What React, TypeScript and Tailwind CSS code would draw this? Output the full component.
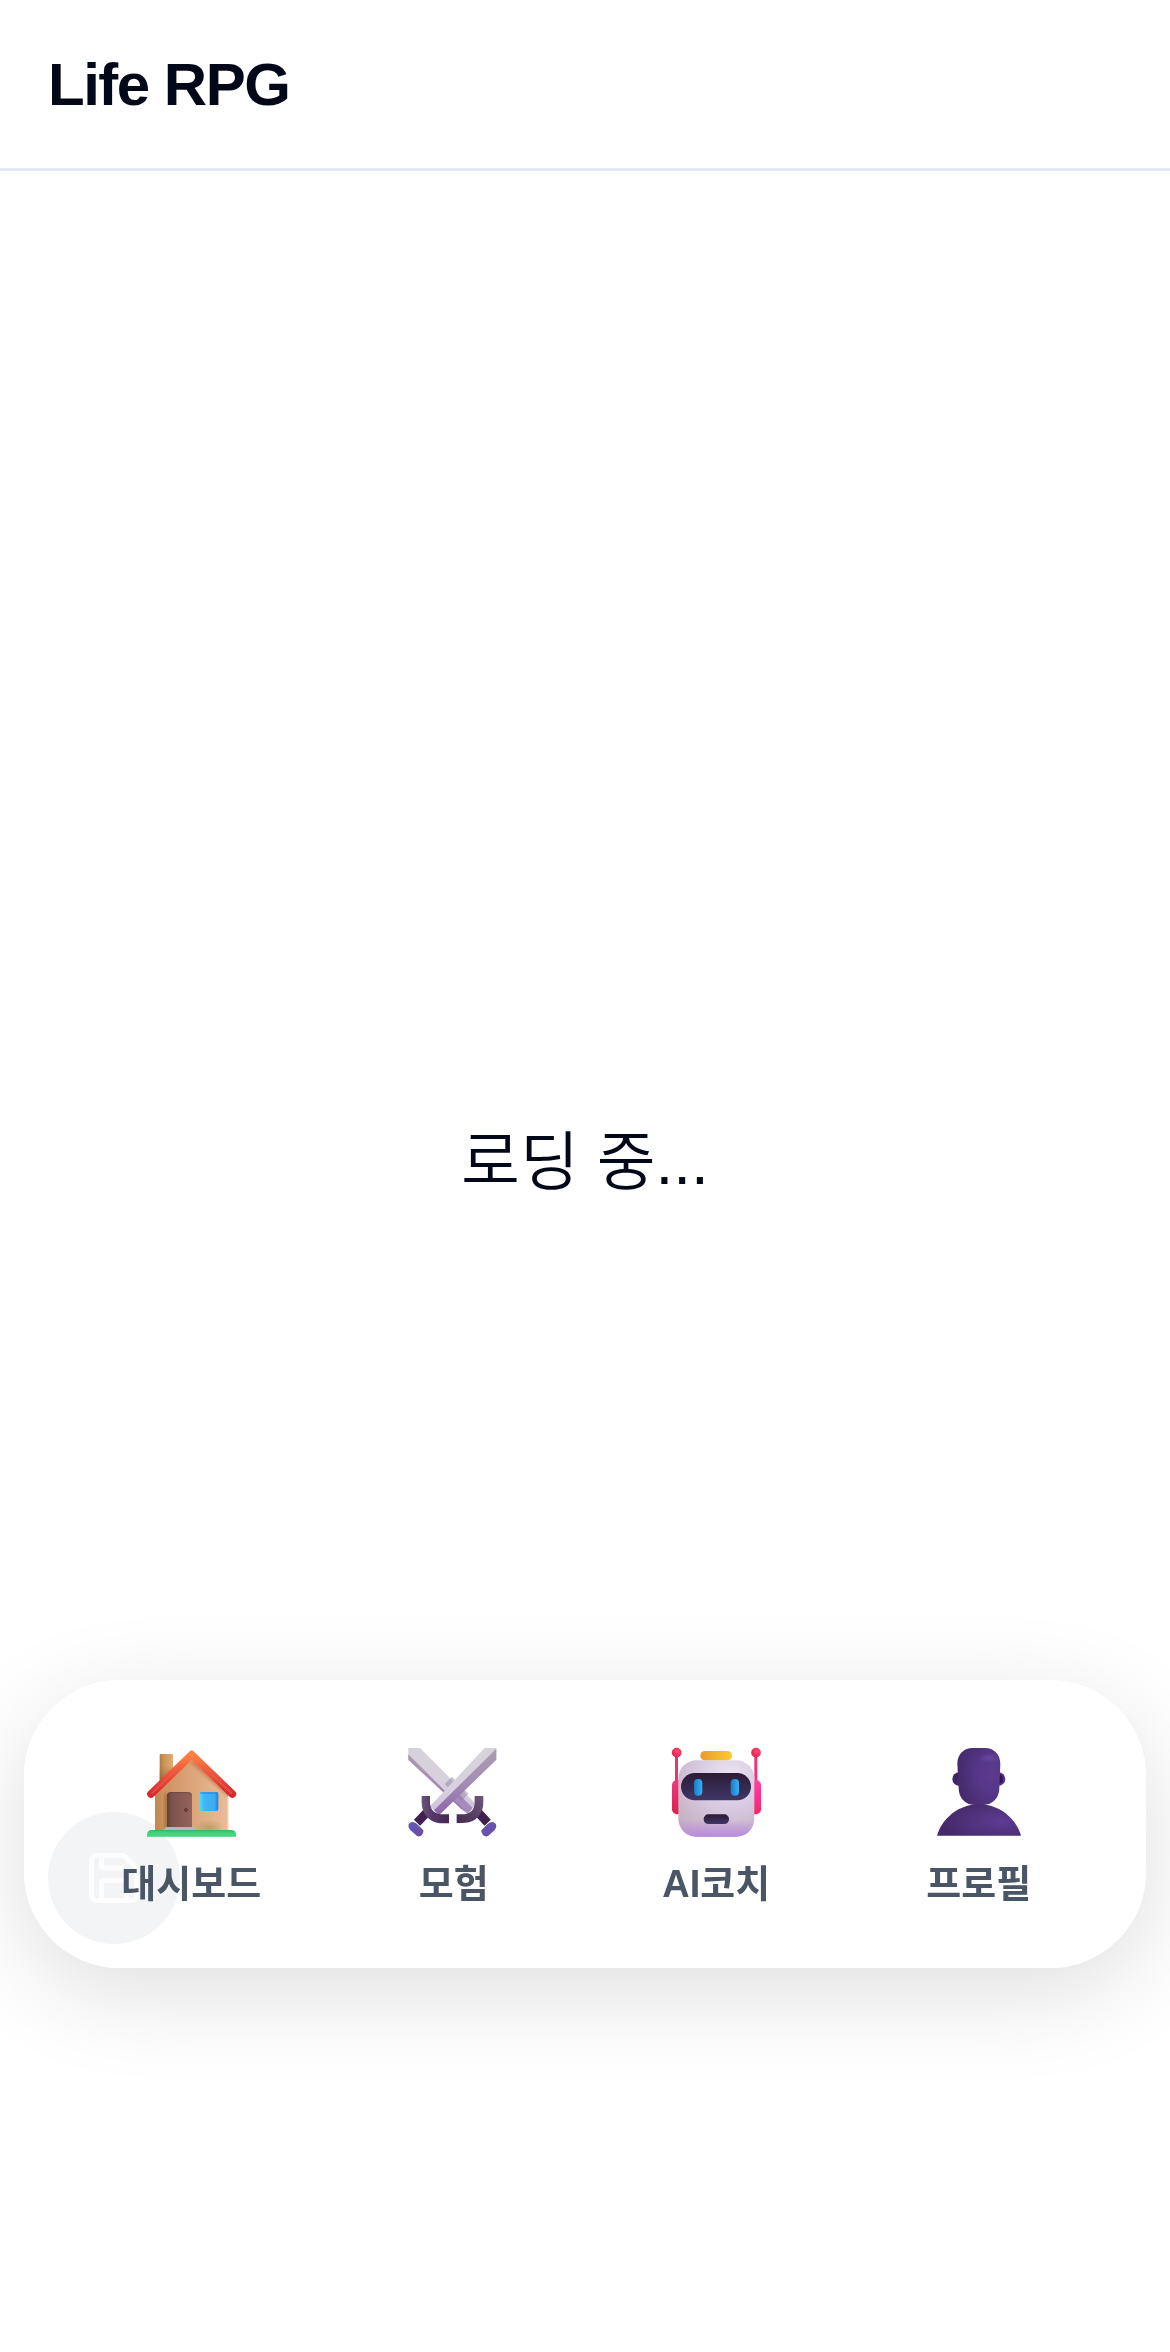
import React from "react";
import { Save } from "lucide-react";

function HouseIcon() {
  return (
    <svg viewBox="39 27 288 288" className="size-24" aria-hidden="true">
      <defs>
        <linearGradient id="h-wall" x1="0" x2="1">
          <stop offset="0" stopColor="#c08850" />
          <stop offset=".14" stopColor="#cf935f" />
          <stop offset=".45" stopColor="#dba276" />
          <stop offset="1" stopColor="#e8bd98" />
        </linearGradient>
        <linearGradient id="h-chim" x1="0" x2="1">
          <stop offset="0" stopColor="#b07c42" />
          <stop offset=".3" stopColor="#cc9258" />
          <stop offset="1" stopColor="#e3ac72" />
        </linearGradient>
        <linearGradient id="h-chimshade" x1="0" y1="0" x2="0" y2="1">
          <stop offset=".4" stopColor="#8d6232" stopOpacity="0" />
          <stop offset="1" stopColor="#8d6232" stopOpacity=".9" />
        </linearGradient>
        <linearGradient id="h-roof" x1="0" y1="0" x2="0" y2="1">
          <stop offset="0" stopColor="#ff8142" />
          <stop offset=".45" stopColor="#ee573c" />
          <stop offset="1" stopColor="#d8282f" />
        </linearGradient>
        <linearGradient id="h-door" x1="0" x2="1">
          <stop offset="0" stopColor="#5f4038" />
          <stop offset=".2" stopColor="#7c544d" />
          <stop offset="1" stopColor="#96625b" />
        </linearGradient>
        <linearGradient id="h-win" x1="0" x2="1">
          <stop offset="0" stopColor="#4be0ff" />
          <stop offset=".25" stopColor="#3fb6f8" />
          <stop offset=".8" stopColor="#3fabf0" />
          <stop offset="1" stopColor="#1f87e0" />
        </linearGradient>
        <linearGradient id="h-grass" x1="0" y1="0" x2="0" y2="1">
          <stop offset="0" stopColor="#35b765" />
          <stop offset=".5" stopColor="#43d67f" />
          <stop offset="1" stopColor="#40d47b" />
        </linearGradient>
        <radialGradient id="h-bush">
          <stop offset="0" stopColor="#c19d68" />
          <stop offset="1" stopColor="#c19d68" stopOpacity="0" />
        </radialGradient>
        <filter id="h-blur" x="-20%" y="-20%" width="140%" height="140%">
          <feGaussianBlur stdDeviation="4" />
        </filter>
        <clipPath id="h-clip">
          <path d="M75 286V172L185 70L295 172V286Z" />
        </clipPath>
      </defs>
      <rect x="89" y="57" width="40" height="90" rx="3" fill="url(#h-chim)" />
      <rect x="89" y="57" width="40" height="90" rx="3" fill="url(#h-chimshade)" />
      <path d="M75 286V172L185 70L295 172V286Z" fill="url(#h-wall)" />
      <g clipPath="url(#h-clip)">
        <path d="M185 80L305 188" stroke="#b4683f" strokeWidth="9" opacity=".65" filter="url(#h-blur)" />
        <rect x="104" y="176" width="16" height="110" fill="#9a6335" opacity=".7" filter="url(#h-blur)" />
        <ellipse cx="237" cy="278" rx="46" ry="24" fill="url(#h-bush)" />
        <path d="M293 186V286" stroke="#f3cfa2" strokeWidth="4" />
      </g>
      <path d="M111 280V182Q111 171 122 171H175Q186 171 186 182V280Z" fill="url(#h-door)" />
      <path d="M114 181Q115 174 123 173H175Q183 174 184 182" fill="none" stroke="#63423b" strokeWidth="3" opacity=".6" />
      <circle cx="168" cy="225" r="4.5" fill="#7e4e48" stroke="#543430" strokeWidth="3" />
      <path d="M102 286Q104 276 112 276H188Q195 276 195 286Z" fill="#b9b5bf" />
      <rect x="208" y="171" width="57" height="57" rx="7" fill="url(#h-win)" />
      <path d="M211 174H262V224" fill="none" stroke="#2286df" strokeWidth="4" opacity=".7" />
      <path d="M51 305V300Q51 285 66 285H303Q318 285 318 300V305Z" fill="url(#h-grass)" />
      <path d="M63 177L185 59L307 177" fill="none" stroke="url(#h-roof)" strokeWidth="23" strokeLinecap="round" strokeLinejoin="round" />
      <path d="M66 175L150 94M304 175L220 94" fill="none" stroke="#f15d48" strokeWidth="6" strokeLinecap="round" opacity=".55" />
    </svg>
  );
}

function SwordsIcon() {
  return (
    <svg viewBox="32 27 288 288" className="size-24" aria-hidden="true">
      <defs>
        <linearGradient id="s-light" x1="0" y1="0" x2="0" y2="1">
          <stop offset="0" stopColor="#d6d2da" />
          <stop offset=".6" stopColor="#d8d0df" />
          <stop offset="1" stopColor="#cfbfdc" />
        </linearGradient>
        <linearGradient id="s-dark" x1="0" y1="0" x2="0" y2="1">
          <stop offset="0" stopColor="#a89eb0" />
          <stop offset=".5" stopColor="#a48eb4" />
          <stop offset="1" stopColor="#8c66a8" />
        </linearGradient>
        <linearGradient id="s-guard" x1="0" x2="1">
          <stop offset="0" stopColor="#6a5478" />
          <stop offset=".4" stopColor="#553868" />
          <stop offset="1" stopColor="#432850" />
        </linearGradient>
        <linearGradient id="s-guard2" x1="1" y1="0" x2="0" y2="1">
          <stop offset="0" stopColor="#6d587a" />
          <stop offset="1" stopColor="#44294f" />
        </linearGradient>
        <linearGradient id="s-pommel" x1="0" y1="0" x2="1" y2="1">
          <stop offset="0" stopColor="#6657b5" />
          <stop offset=".5" stopColor="#6554ac" />
          <stop offset="1" stopColor="#744698" />
        </linearGradient>
      </defs>
      <path d="M39 39H74L232 197L240 207L222 235L205 224L39 74Z" fill="url(#s-light)" />
      <path d="M39 58L213 232L198 222L39 75Z" fill="url(#s-dark)" />
      <path d="M148 147L170 125L220 176L197 198Z" fill="#8f7d9c" opacity=".45" />
      <path d="M165 190L184 170L232 219L216 237Z" fill="#9577b0" opacity=".75" />
      <path d="M248 232L277 263" stroke="#40204f" strokeWidth="26" />
      <path d="M238 183H264V200C264 240 240 264 200 264H184V238H200C225 238 238 225 238 200Z" fill="url(#s-guard2)" />
      <path d="M258 286Q256 292 263 300Q270 307 278 303L299 284Q305 276 302 268Q296 259 286 262Q281 263 276 268Z" fill="url(#s-pommel)" />
      <path d="M268 39H303V70L128 240L104 214Z" fill="url(#s-light)" />
      <path d="M303 41V74L132 240L116 226Z" fill="url(#s-dark)" />
      <path d="M95 232L65 263" stroke="#40204f" strokeWidth="26" />
      <path d="M79 183H104V200C104 225 118 238 143 238H161V265H143C104 265 79 240 79 200Z" fill="url(#s-guard)" />
      <path d="M84 286Q86 292 80 300Q73 307 65 303L44 284Q37 276 40 268Q46 259 56 262Q61 263 66 268Z" fill="url(#s-pommel)" />
    </svg>
  );
}

function RobotIcon() {
  return (
    <svg viewBox="39 27 288 288" className="size-24" aria-hidden="true">
      <defs>
        <radialGradient id="r-face" cx=".68" cy=".2" r=".9">
          <stop offset="0" stopColor="#ebe4f0" />
          <stop offset=".45" stopColor="#d9cbe4" />
          <stop offset="1" stopColor="#c6aebf" />
        </radialGradient>
        <linearGradient id="r-bottom" x1="0" y1="0" x2="0" y2="1">
          <stop offset=".78" stopColor="#b98be0" stopOpacity="0" />
          <stop offset="1" stopColor="#b98be0" />
        </linearGradient>
        <linearGradient id="r-visor" x1="0" y1="0" x2="0" y2="1">
          <stop offset="0" stopColor="#2d1a35" />
          <stop offset="1" stopColor="#3e3768" />
        </linearGradient>
        <linearGradient id="r-hat" x1="0" x2="1">
          <stop offset="0" stopColor="#e99a2e" />
          <stop offset=".5" stopColor="#f3b431" />
          <stop offset="1" stopColor="#fcc92f" />
        </linearGradient>
        <linearGradient id="r-eye" x1="0" x2="1">
          <stop offset="0" stopColor="#1c79c4" />
          <stop offset=".6" stopColor="#2c9de4" />
          <stop offset="1" stopColor="#36abef" />
        </linearGradient>
        <linearGradient id="r-ear" x1="0" y1="0" x2="0" y2="1">
          <stop offset="0" stopColor="#ee3a7f" />
          <stop offset="1" stopColor="#da1f4c" />
        </linearGradient>
        <linearGradient id="r-ear2" x1="0" y1="0" x2="0" y2="1">
          <stop offset="0" stopColor="#fb479b" />
          <stop offset=".5" stopColor="#ff2e8c" />
          <stop offset="1" stopColor="#f3285f" />
        </linearGradient>
        <radialGradient id="r-ball" cx=".6" cy=".35" r=".7">
          <stop offset="0" stopColor="#ff4a70" />
          <stop offset="1" stopColor="#e11e50" />
        </radialGradient>
      </defs>
      <rect x="60" y="60" width="9" height="90" fill="#e9366d" />
      <rect x="298" y="60" width="9" height="90" fill="#f0347a" />
      <circle cx="65" cy="53" r="14.5" fill="url(#r-ball)" />
      <circle cx="303" cy="53" r="14.5" fill="url(#r-ball)" />
      <rect x="51" y="135" width="40" height="103" rx="15" fill="url(#r-ear)" />
      <rect x="278" y="135" width="40" height="103" rx="15" fill="url(#r-ear2)" />
      <rect x="70" y="76" width="228" height="229" rx="54" fill="url(#r-face)" />
      <rect x="70" y="76" width="228" height="229" rx="54" fill="url(#r-bottom)" />
      <rect x="136" y="48" width="95" height="28" rx="14" fill="url(#r-hat)" />
      <rect x="78" y="114" width="210" height="82" rx="41" fill="url(#r-visor)" />
      <rect x="117" y="132" width="25" height="50" rx="12" fill="url(#r-eye)" />
      <rect x="227" y="132" width="25" height="50" rx="12" fill="url(#r-eye)" />
      <rect x="146" y="238" width="76" height="29" rx="14" fill="url(#r-visor)" />
    </svg>
  );
}

function PersonIcon() {
  return (
    <svg viewBox="33 27 288 288" className="size-24" aria-hidden="true">
      <defs>
        <radialGradient id="p-head" cx=".82" cy=".45" r=".8">
          <stop offset="0" stopColor="#5c3a8e" />
          <stop offset=".4" stopColor="#57378a" />
          <stop offset="1" stopColor="#452b6c" />
        </radialGradient>
        <radialGradient id="p-body" cx=".76" cy=".55" r=".7">
          <stop offset="0" stopColor="#5e3b93" />
          <stop offset="1" stopColor="#452a69" />
        </radialGradient>
        <radialGradient id="p-shine">
          <stop offset="0" stopColor="#6b46a0" />
          <stop offset="1" stopColor="#6b46a0" stopOpacity="0" />
        </radialGradient>
      </defs>
      <ellipse cx="117" cy="132" rx="20" ry="20" fill="#41236a" />
      <ellipse cx="236" cy="132" rx="20" ry="20" fill="#55318a" />
      <ellipse cx="238" cy="132" rx="11" ry="14" fill="#321350" />
      <path d="M51 302C66 250 116 208 177 208S288 250 303 302Z" fill="url(#p-body)" />
      <path d="M112 86C112 57 132 39 158 39H195C221 39 241 57 241 86L238 160C238 190 216 210 190 210H163C137 210 116 190 116 160Z" fill="url(#p-head)" />
      <ellipse cx="207" cy="69" rx="32" ry="14" fill="url(#p-shine)" />
    </svg>
  );
}

const items = [
  { label: "대시보드", Icon: HouseIcon },
  { label: "모험", Icon: SwordsIcon },
  { label: "AI코치", Icon: RobotIcon },
  { label: "프로필", Icon: PersonIcon },
];

export default function App() {
  return (
    <div className="flex min-h-screen flex-col bg-white font-['Liberation_Sans','Noto_Sans_CJK_KR',sans-serif] text-[#020817]">
      <header className="flex h-[171px] items-center border-b-3 border-[#e2e8f0] px-12 pt-[2px]">
        <h1 className="text-[60px] leading-[84px] font-bold tracking-tight">Life RPG</h1>
      </header>

      <main className="flex flex-1 items-center justify-center pb-[200px]">
        <p className="text-[64px] leading-[84px] font-[350]">로딩 중...</p>
      </main>

      <button
        type="button"
        aria-label="저장"
        className="fixed bottom-[408px] left-12 flex size-[132px] items-center justify-center rounded-full bg-gray-500"
      >
        <Save className="size-[60px] text-gray-200" />
      </button>

      <nav className="fixed inset-x-6 bottom-96 grid grid-cols-4 rounded-[96px] bg-white/92 px-9 pt-16 pb-15 shadow-[0_24px_96px_rgba(0,0,0,0.13)]">
        {items.map(({ label, Icon }) => (
          <a key={label} href="#" className="flex flex-col items-center gap-5">
            <Icon />
            <span className="text-[38px] leading-[48px] font-bold text-gray-600">
              {label}
            </span>
          </a>
        ))}
      </nav>
    </div>
  );
}
